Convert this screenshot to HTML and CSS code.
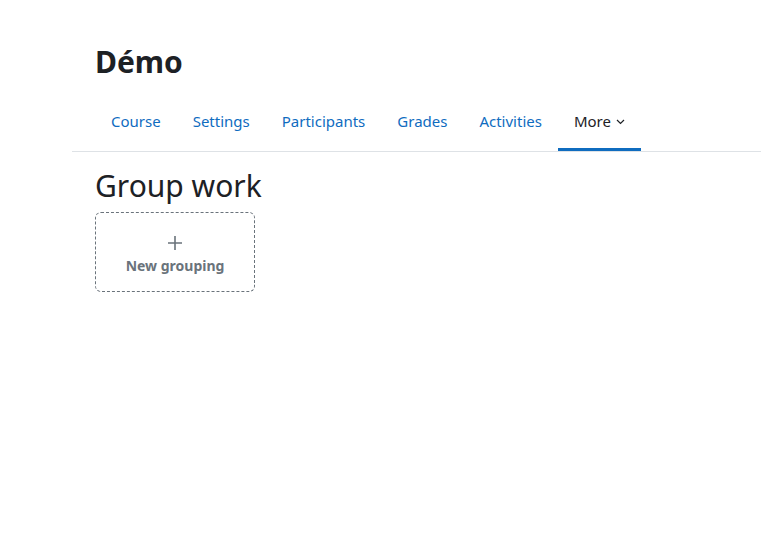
FILE: index.html
```html
<!DOCTYPE html>
<html lang="en">
<head>
  <meta charset="UTF-8">
  <meta name="viewport" content="width=device-width, initial-scale=1.0">
  <title>Démo: Group work</title>
  <link rel="stylesheet" href="styles.css">
</head>
<body>
  <div class="page">
    <header class="page-header">
      <h1>Démo</h1>
    </header>
    <nav class="secondary-nav">
      <ul>
        <li><a href="#">Course</a></li>
        <li><a href="#">Settings</a></li>
        <li><a href="#">Participants</a></li>
        <li><a href="#">Grades</a></li>
        <li><a href="#">Activities</a></li>
        <li><a href="#" class="active">More
          <svg class="caret" width="9" height="6" viewBox="0 0 9 6"><path d="M1 1l3.5 3.5L8 1" fill="none" stroke="#1d2125" stroke-width="1.2"/></svg>
        </a></li>
      </ul>
    </nav>
    <main class="content">
      <h2>Group work</h2>
      <button class="new-grouping">
        <svg class="plus" width="14" height="14" viewBox="0 0 14 14"><path d="M7 0v14M0 7h14" stroke="#6a737b" stroke-width="1.6"/></svg>
        <span class="label">New grouping</span>
      </button>
    </main>
  </div>
</body>
</html>
```

FILE: styles.css
```css
html, body {
  margin: 0;
  padding: 0;
  background: #fff;
  font-family: "Noto Sans", "Open Sans", sans-serif;
  color: #1d2125;
}
.page {
  padding-left: 72px;
}
.page-header {
  padding: 44px 0 0 23px;
  margin-bottom: 17px;
}
h1 {
  margin: 0;
  font-size: 30px;
  font-weight: 700;
  line-height: 36px;
}
.secondary-nav {
  border-bottom: 1px solid #dee2e6;
  padding-left: 23px;
}
.secondary-nav ul {
  list-style: none;
  margin: 0;
  padding: 0;
  display: flex;
}
.secondary-nav a {
  display: flex;
  align-items: center;
  gap: 5px;
  padding: 10px 16px 16px;
  font-size: 15px;
  line-height: 22px;
  color: #0f6cbf;
  text-decoration: none;
  border-bottom: 3px solid transparent;
  margin-top: 3px;
}
.secondary-nav a.active {
  color: #1d2125;
  border-bottom-color: #0f6cbf;
}
.caret {
  display: block;
  margin-top: 1px;
}
.content {
  padding: 14px 0 0 23px;
}
h2 {
  margin: 0 0 6px;
  font-size: 30px;
  font-weight: 400;
  line-height: 40px;
}
.new-grouping {
  display: flex;
  flex-direction: column;
  align-items: center;
  justify-content: center;
  width: 160px;
  height: 80px;
  background: #fff;
  border: 1px dashed #6a737b;
  border-radius: 6px;
  font-family: inherit;
  color: #6a737b;
  cursor: pointer;
  padding: 6px 0 0;
}
.plus {
  display: block;
  margin: 2px 0 6px;
}
.label {
  font-size: 14px;
  font-weight: 700;
  line-height: 20px;
}
```
